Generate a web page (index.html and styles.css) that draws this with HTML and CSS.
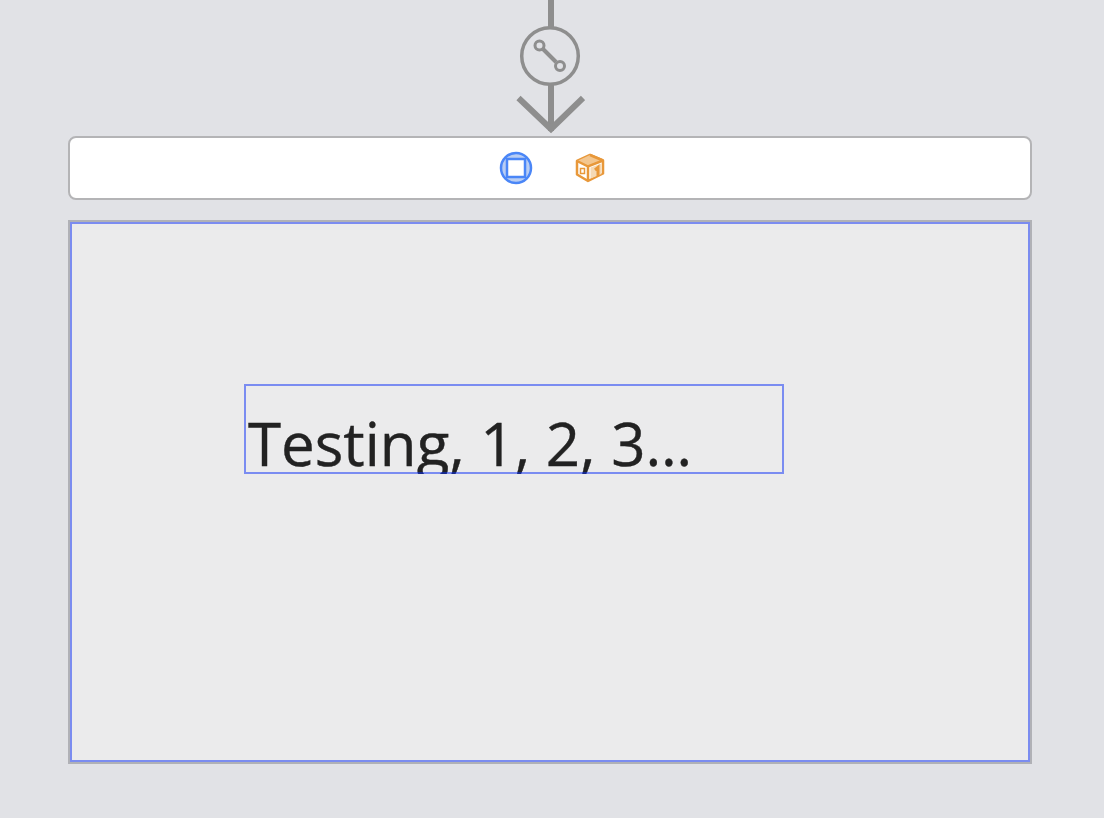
FILE: index.html
```html
<!DOCTYPE html>
<html lang="en">
<head>
  <meta charset="UTF-8">
  <title>Storyboard scene</title>
  <link rel="stylesheet" href="styles.css">
</head>
<body>
  <div class="segue">
    <svg class="segue-icon" width="70" height="136" viewBox="0 0 70 136">
      <path d="M36 0V131" fill="none" stroke="#8e8e8e" stroke-width="6"/>
      <circle cx="35" cy="56" r="28.300" fill="#e1e2e6" stroke="#8e8e8e" stroke-width="3.500"/>
      <path d="M28 49L41 62" fill="none" stroke="#8e8e8e" stroke-width="4"/>
      <circle cx="24.500" cy="45.500" r="4.500" fill="#e1e2e6" stroke="#8e8e8e" stroke-width="3"/>
      <circle cx="45" cy="66" r="4.500" fill="#e1e2e6" stroke="#8e8e8e" stroke-width="3"/>
      <path d="M3.500 98L36 129L68 98" fill="none" stroke="#8e8e8e" stroke-width="6"/>
    </svg>
  </div>

  <div class="dock">
    <svg class="dock-icon" width="34" height="34" viewBox="0 0 34 34">
      <circle cx="17" cy="17" r="15" fill="#b8cdf3" stroke="#4a86f7" stroke-width="2.500"/>
      <rect x="8" y="8" width="18" height="18" fill="#fff" stroke="#4a86f7" stroke-width="2.500"/>
    </svg>
    <svg class="dock-icon" width="30" height="30" viewBox="0 0 30 30">
      <path d="M15 2L28 7.500V20.500L13 28L2 21.500V8Z" fill="#fff" stroke="#e8983a" stroke-width="2.500" stroke-linejoin="round"/>
      <path d="M15 2L28 7.500L13 13.500L2 8Z" fill="#f3c68f"/>
      <path d="M2 8L13 13.500L28 7.500M13 13.500V28" fill="none" stroke="#e8983a" stroke-width="2.500"/>
      <path d="M15 2L28 7.500" fill="none" stroke="#e8983a" stroke-width="2.500"/>
      <rect x="5.500" y="15.500" width="4" height="5" fill="#fff" stroke="#e8983a" stroke-width="1.500"/>
      <path d="M15.500 14.500L26.500 10.500V21L15.500 25.500Z" fill="#f5d9b5"/>
      <path d="M20 17L23 14.500V23" fill="none" stroke="#e8983a" stroke-width="3"/>
    </svg>
  </div>

  <div class="view">
    <div class="view-inner">
      <div class="label">
        <span class="label-text">Testing, 1, 2, 3…</span>
      </div>
    </div>
  </div>
</body>
</html>
```

FILE: styles.css
```css
* {
  margin: 0;
  padding: 0;
  box-sizing: border-box;
}

body {
  width: 1104px;
  height: 818px;
  overflow: hidden;
  background: #e1e2e6;
  font-family: 'Open Sans', Arial, sans-serif;
}

.segue {
  height: 136px;
  padding-left: 515px;
}

.segue-icon {
  display: block;
}

.dock {
  width: 964px;
  height: 64px;
  margin-left: 68px;
  padding-left: 429px;
  display: flex;
  align-items: center;
  gap: 42px;
  background: #fff;
  border: 2px solid #b4b4b6;
  border-radius: 8px;
}

.dock-icon {
  display: block;
}

.view {
  width: 964px;
  height: 544px;
  margin: 20px 0 0 68px;
  border: 2px solid #b0b1b6;
}

.view-inner {
  height: 100%;
  padding: 160px 0 0 172px;
  background: #ebebec;
  border: 2px solid #7b8cf0;
}

.label {
  position: relative;
  width: 540px;
  height: 90px;
  overflow: hidden;
}

.label::after {
  content: '';
  position: absolute;
  inset: 0;
  border: 2px solid rgba(10, 46, 246, 0.5);
}

.label-text {
  display: block;
  padding: 16px 0 0 4px;
  color: #222;
  font-size: 60px;
  line-height: 87px;
  white-space: nowrap;
  -webkit-text-stroke: 0.4px #222;
}
```
